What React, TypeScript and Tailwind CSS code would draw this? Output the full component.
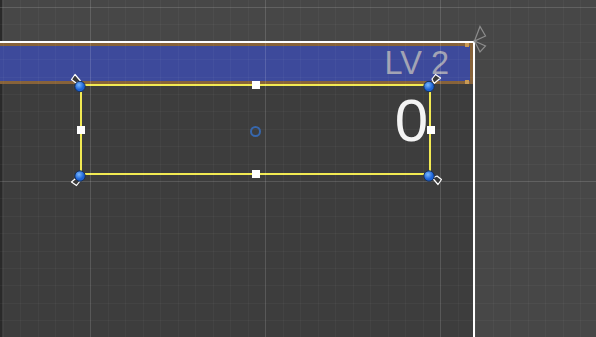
import React from "react";

// scene grid: minor every 17.5px, major every 10th line
const gridXs = Array.from({ length: 35 }, (_, i) => 2.5 + i * 17.5);
const gridYs = Array.from({ length: 20 }, (_, i) => 7 + i * 17.4);

const SceneGrid = () => (
  <svg
    className="absolute inset-0 pointer-events-none"
    width={596}
    height={337}
  >
    {gridXs.map((x, i) => (
      <line
        key={"x" + i}
        x1={Math.round(x) + 0.5}
        x2={Math.round(x) + 0.5}
        y1={0}
        y2={337}
        stroke="#ffffff"
        strokeOpacity={(i - 5) % 10 === 0 ? 0.14 : 0.035}
      />
    ))}
    {gridYs.map((y, i) => (
      <line
        key={"y" + i}
        x1={0}
        x2={596}
        y1={Math.round(y) + 0.5}
        y2={Math.round(y) + 0.5}
        stroke="#ffffff"
        strokeOpacity={i % 10 === 0 ? 0.14 : 0.035}
      />
    ))}
  </svg>
);

const corners = [
  { x: 80, y: 86.5 },
  { x: 429, y: 86.5 },
  { x: 80, y: 176 },
  { x: 429, y: 176 },
];

const squares = [
  { x: 256, y: 85 },
  { x: 256, y: 174 },
  { x: 81, y: 130 },
  { x: 431, y: 130 },
];

const anchors = [
  { x: 76, y: 79, r: 0 },
  { x: 436, y: 79, r: 90 },
  { x: 76, y: 181, r: -90 },
  { x: 437, y: 180, r: 180 },
];

// rect tool gizmos drawn over the selected text
const Gizmos = () => (
  <svg
    className="absolute inset-0 pointer-events-none"
    width={596}
    height={337}
  >
    <defs>
      <radialGradient id="dot" cx="40%" cy="35%" r="65%">
        <stop offset="0%" stopColor="#78b8ff" />
        <stop offset="70%" stopColor="#1d63d6" />
      </radialGradient>
    </defs>
    {/* canvas corner anchors */}
    <path d="M474.5 41 L480 26.5 L485.5 36 Z" fill="none" stroke="#8c8c8c" strokeWidth={1.2} />
    <path d="M474.5 41 L485.5 46 L480 52 Z" fill="none" stroke="#8c8c8c" strokeWidth={1.2} />

    {anchors.map((a, i) => (
      <path
        key={"a" + i}
        d="M-1 -4.5 L-4.5 0.5 L0 4 L4.5 2 Z"
        transform={`translate(${a.x} ${a.y}) rotate(${a.r})`}
        fill="#3a3a3a"
        stroke="#ffffff"
        strokeWidth={1.2}
        strokeLinejoin="round"
      />
    ))}
    {squares.map((s, i) => (
      <rect key={"s" + i} x={s.x - 4} y={s.y - 4} width={8} height={8} fill="#ffffff" />
    ))}
    {corners.map((c, i) => (
      <circle
        key={"c" + i}
        cx={c.x}
        cy={c.y}
        r={5.2}
        fill="url(#dot)"
        stroke="#16305a"
        strokeWidth={1}
      />
    ))}
    <circle cx={255.5} cy={131.5} r={4.5} fill="none" stroke="#3767ad" strokeWidth={2} />
  </svg>
);

export default function App() {
  return (
    <div className="relative w-[596px] h-[337px] overflow-hidden bg-[#474747] flex flex-col font-['Liberation_Sans',Arial,sans-serif]">
      <div className="h-[41px] shrink-0 border-l-2 border-[#2a2a2a]" />
      <div className="relative w-[475px] flex-1 flex flex-col border-t-2 border-r-2 border-white bg-[#3d3d3d]">
        {/* LV bar */}
        <div className="relative h-[41px] shrink-0 flex items-center justify-end pr-[21px] bg-[#3d4a9b] border-y-[3px] border-r-[3px] border-[#87633a]">
          <span className="text-[32.5px] leading-none text-[#a2a3b4]">LV 2</span>
          <div className="absolute -top-[3px] right-[1px] w-[4px] h-[4px] bg-[#c99a55]" />
          <div className="absolute -bottom-[3px] right-[1px] w-[4px] h-[4px] bg-[#c99a55]" />
        </div>
        <div className="flex-1 flex flex-col border-l-2 border-[#2a2a2a]">
          {/* score text rect */}
          <div className="ml-[78px] w-[351px] h-[91px] flex items-start justify-end pt-[5px] pr-[1px] border-2 border-[#f2ea52]">
            <span className="text-[60px] leading-none text-[#f4f4f4]">0</span>
          </div>
        </div>
      </div>

      <SceneGrid />
      <Gizmos />
    </div>
  );
}
